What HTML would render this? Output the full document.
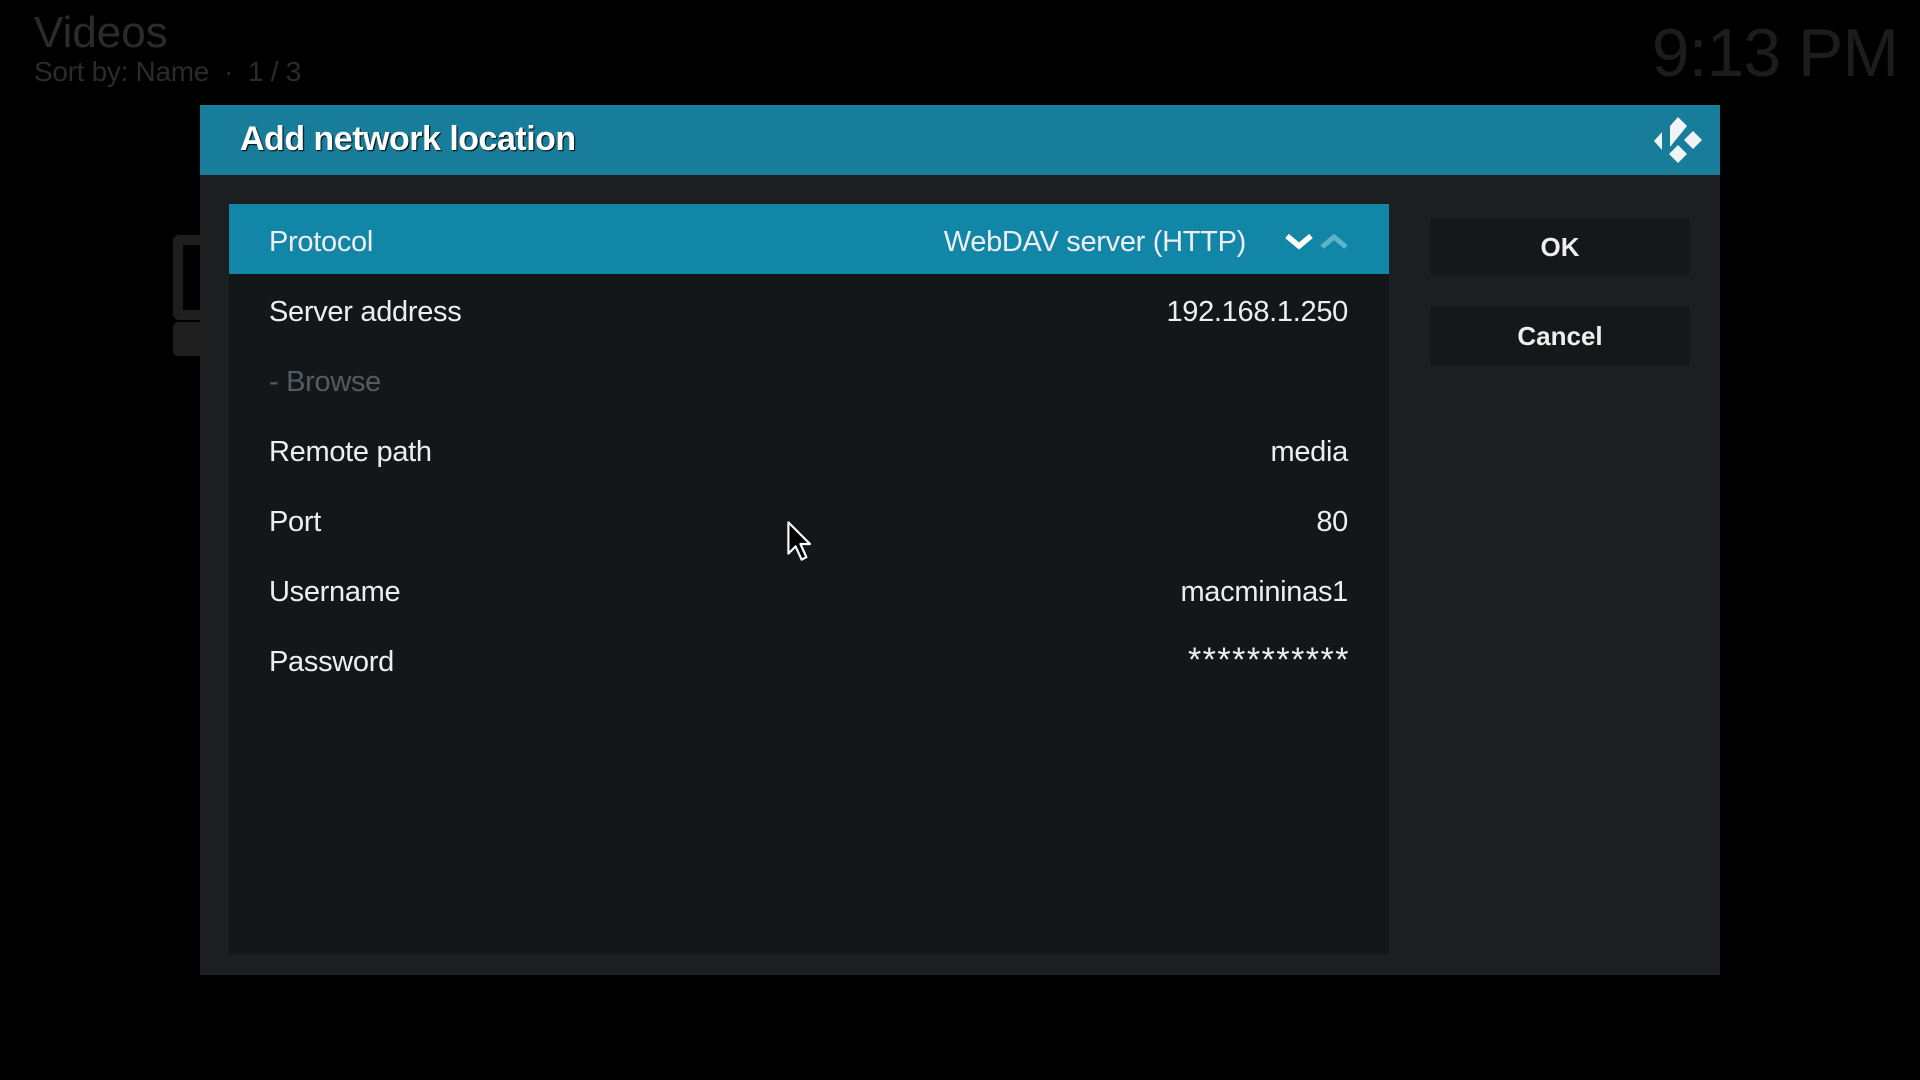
<!DOCTYPE html>
<html><head><meta charset="utf-8"><style>
*{margin:0;padding:0;box-sizing:border-box}
body{width:1920px;height:1080px;background:#000;overflow:hidden;position:relative;font-family:"Liberation Sans",sans-serif;color:#fff}
.abs{position:absolute}
.lbl{position:absolute;left:269px;font-size:29px;letter-spacing:-0.3px;line-height:70px;color:#eceeef}
.val{position:absolute;right:41px;font-size:29px;letter-spacing:-0.3px;line-height:70px;text-align:right;color:#eceeef}
.row{position:absolute;left:0;width:1160px;height:70px}
.btn{position:absolute;left:1430px;width:260px;background:#151718;border-radius:4px;font-weight:bold;font-size:26px;text-align:center;color:#eee}
</style></head><body>
<div class="abs" style="left:34px;top:8px;font-size:44px;color:#2b2b2b">Videos</div>
<div class="abs" style="left:34px;top:56px;font-size:28px;color:#2b2b2b;letter-spacing:-0.3px">Sort by: Name &nbsp;·&nbsp; 1 / 3</div>
<div class="abs" style="right:22px;top:14px;font-size:68px;color:#1c1c1c;letter-spacing:-1px">9:13 PM</div>
<div class="abs" style="left:173px;top:235px;width:40px;height:85px;border:10px solid #1e1e1e;border-radius:6px"></div>
<div class="abs" style="left:173px;top:322px;width:40px;height:34px;background:#1e1e1e;border-radius:5px"></div>

<div class="abs" style="left:200px;top:105px;width:1520px;height:870px;background:#1b1f21"></div>
<div class="abs" style="left:200px;top:105px;width:1520px;height:70px;background:#177d9a"></div>
<div class="abs" style="left:240px;top:120px;font-size:34px;font-weight:bold;letter-spacing:-0.5px;text-shadow:1px 1px 1px #000">Add network location</div>
<svg class="abs" style="left:1640px;top:110px" width="70" height="60" viewBox="1640 110 70 60">
<g fill="#f0f4f6">
<polygon points="1654,141 1662,132 1662,150"/>
<polygon points="1670,147 1670,126 1678,117 1687,126"/>
<polygon points="1693,131 1702,140 1693,149 1684,140"/>
<polygon points="1678,145 1687,154 1678,163 1669,154"/>
</g></svg>

<div class="abs" style="left:229px;top:204px;width:1160px;height:750px;background:#141719">
 <div class="row" style="top:0;background:#1286a6"></div>
</div>
<div class="abs" style="left:0;top:207px;width:1389px;height:500px">
 <div class="lbl" style="top:0">Protocol</div>
 <div class="val" style="top:0;right:143px">WebDAV server (HTTP)</div>
 <svg class="abs" style="left:1284px;top:24px" width="70" height="20" viewBox="0 0 70 20">
  <polyline points="3,5 15,15 27,5" fill="none" stroke="#fff" stroke-width="5.5"/>
  <polyline points="38,16 50,6 62,16" fill="none" stroke="#5fb3c8" stroke-width="5"/>
 </svg>
 <div class="lbl" style="top:70px">Server address</div>
 <div class="val" style="top:70px">192.168.1.250</div>
 <div class="lbl" style="top:140px;color:#555b5e">- Browse</div>
 <div class="lbl" style="top:210px">Remote path</div>
 <div class="val" style="top:210px">media</div>
 <div class="lbl" style="top:280px">Port</div>
 <div class="val" style="top:280px">80</div>
 <div class="lbl" style="top:350px">Username</div>
 <div class="val" style="top:350px">macmininas1</div>
 <div class="lbl" style="top:420px">Password</div>
 <div class="val" style="top:418px;font-size:34px;letter-spacing:1.5px;right:39px">***********</div>
</div>
<div class="btn" style="top:218px;height:58px;line-height:58px">OK</div>
<div class="btn" style="top:307px;height:59px;line-height:59px">Cancel</div>
<svg class="abs" style="left:786px;top:520px" width="36" height="48" viewBox="0 0 30 40">
<path d="M2,2 L2,28 L8,22 L13,33 L17,31 L12,20 L20,20 Z" fill="#000" stroke="#fff" stroke-width="1.8" stroke-linejoin="round"/>
</svg>
</body></html>
